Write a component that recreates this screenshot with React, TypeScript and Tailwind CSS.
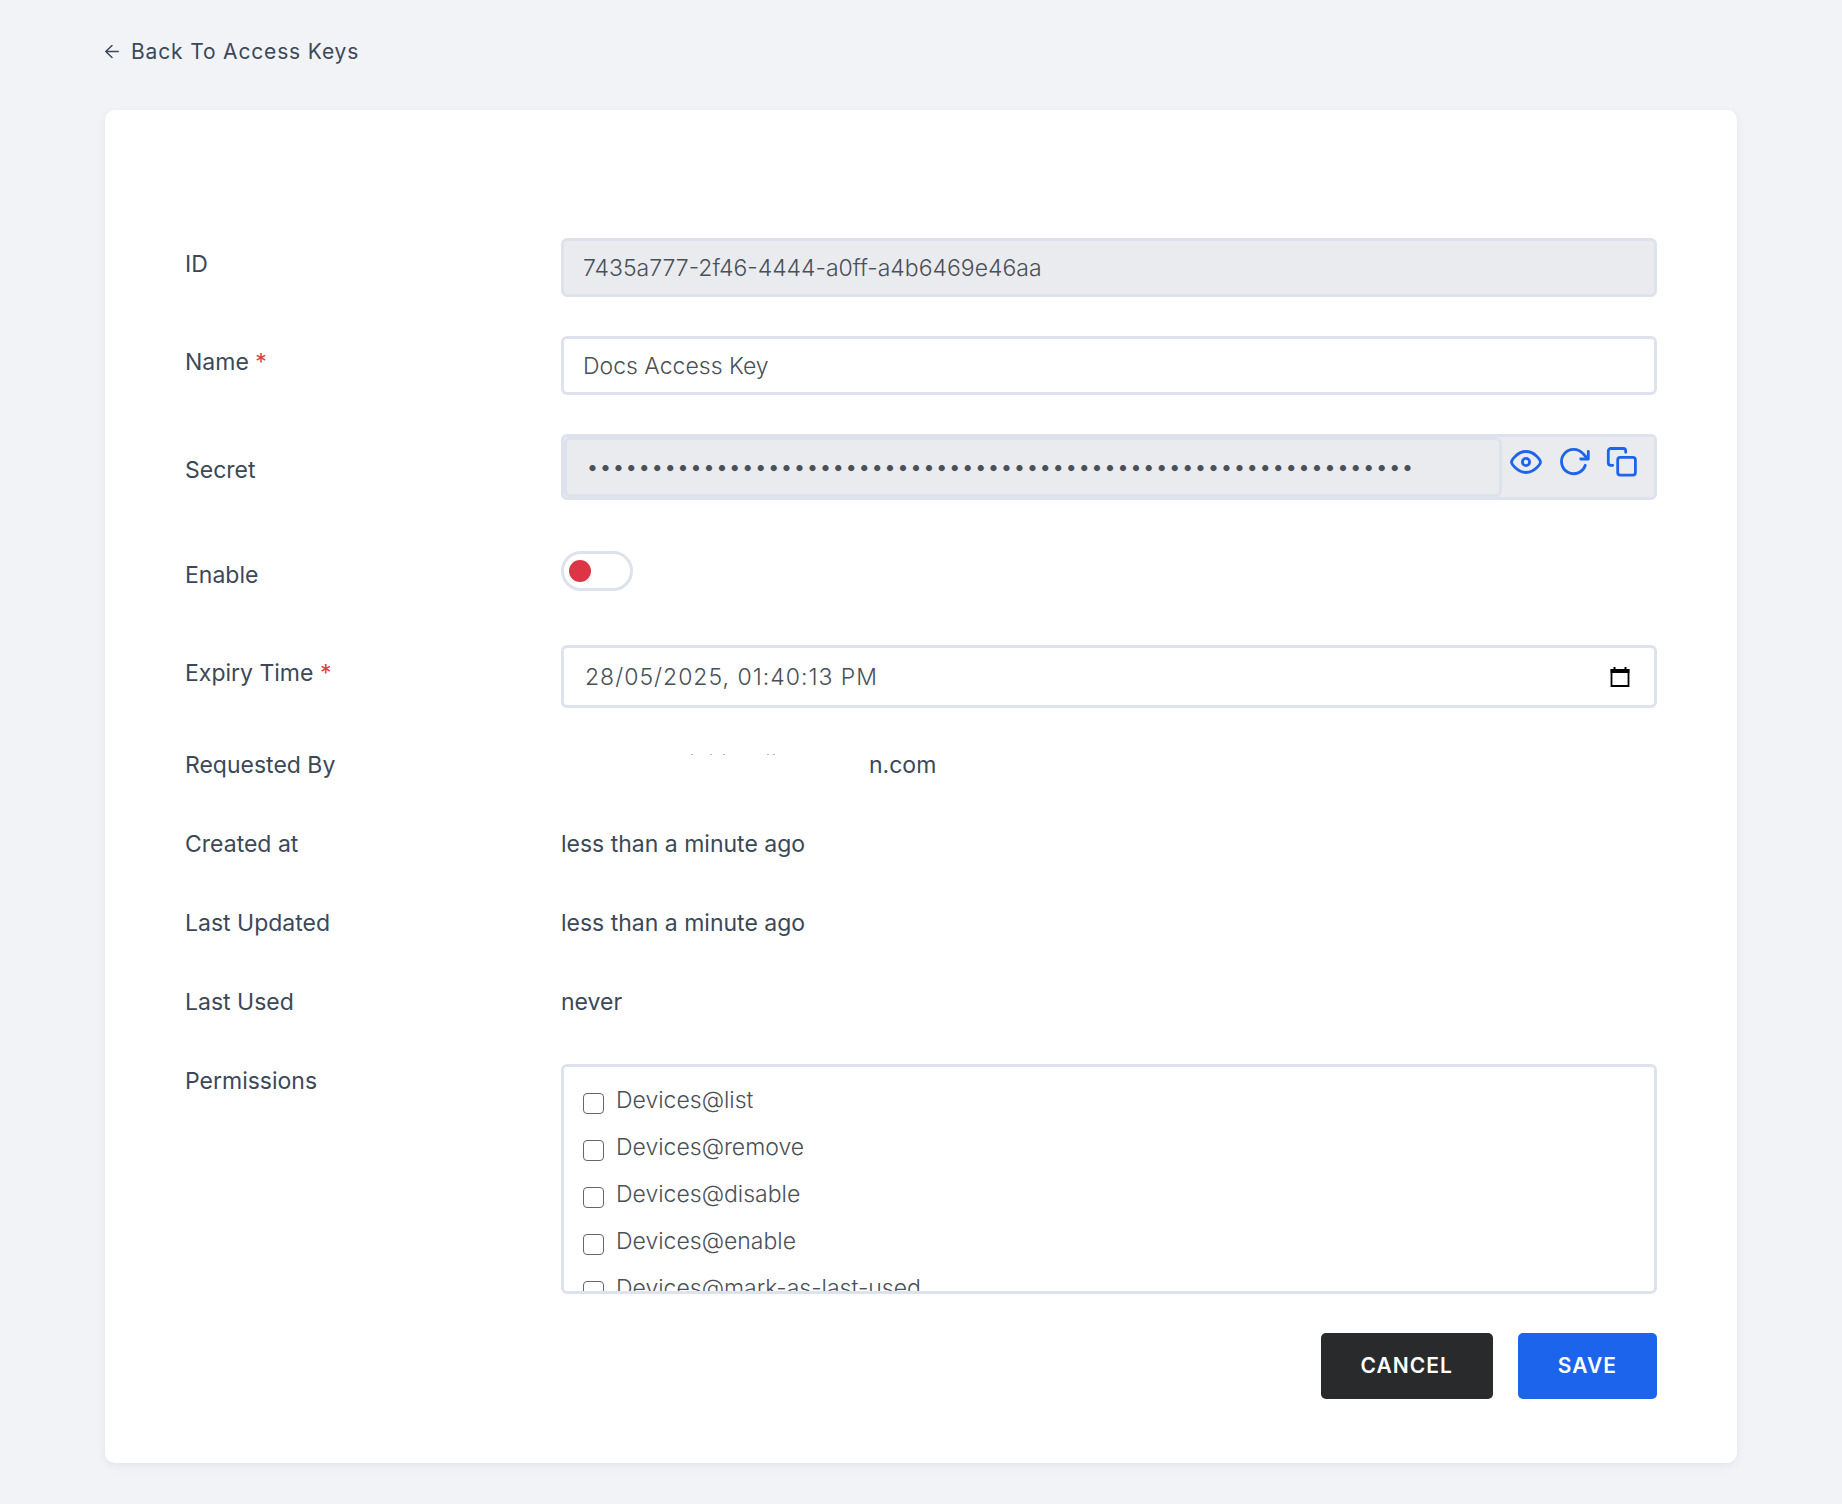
import React, { useState } from 'react';

const PERMISSIONS = [
    'Devices@list',
    'Devices@remove',
    'Devices@disable',
    'Devices@enable',
    'Devices@mark-as-last-used',
];

const inputClass = 'w-full rounded-[6px] border-[3px] border-[#dee2ec] px-[19px] text-[23px] font-[350] text-[#495057] outline-none';

const iconProps = {
    viewBox: '0 0 32 32',
    fill: 'none',
    stroke: 'currentColor',
    strokeWidth: 2.8,
    strokeLinecap: 'round' as const,
    strokeLinejoin: 'round' as const,
    className: 'w-8 h-8',
};

const EyeIcon = () => (
    <svg {...iconProps}>
        <path d="M1.5 16C1.5 14.4 7 5.5 16 5.5S30.5 14.4 30.5 16 25 26.5 16 26.5 1.5 17.6 1.5 16Z" />
        <circle cx="16" cy="16" r="3.6" />
    </svg>
);

const RefreshIcon = () => (
    <svg {...iconProps}>
        <path d="M27.3 19.3A12.2 12.2 0 1 1 25 7.6L29.6 12.8" />
        <path d="M30.3 5.3V13H22.7" />
    </svg>
);

const CopyIcon = () => (
    <svg {...iconProps}>
        <rect x="11.7" y="11.4" width="17.7" height="17.7" rx="2.5" />
        <path d="M6.7 19.3H4.8A2.5 2.5 0 0 1 2.3 16.8V5A2.5 2.5 0 0 1 4.8 2.5H17.2A2.5 2.5 0 0 1 19.7 5V6.3" />
    </svg>
);

const CalendarIcon = () => (
    <svg viewBox="0 0 20 20" className="w-5 h-5">
        <path d="M1.5 3H18.5V19H1.5Z" fill="none" stroke="currentColor" strokeWidth="1.8" />
        <path d="M0.6 2H19.4V6H0.6ZM3.5 0H5.5V3H3.5ZM14.5 0H16.5V3H14.5Z" fill="currentColor" />
    </svg>
);

interface RowProps {
    label: string;
    htmlFor?: string;
    required?: boolean;
    labelClass?: string;
    children: React.ReactNode;
}

const FormRow: React.FC<RowProps> = ({ label, htmlFor, required, labelClass = 'pt-2', children }) => (
    <div className="flex min-h-10 -mx-4">
        <div className={`w-1/4 px-4 leading-9 ${labelClass}`}>
            <label htmlFor={htmlFor}>
                {label}
                {required && <span className="text-[#d9413f]"> *</span>}
            </label>
        </div>
        <div className="w-3/4 px-4 leading-9">{children}</div>
    </div>
);

export default function App() {
    const [name, setName] = useState('Docs Access Key');
    const [expiry, setExpiry] = useState('28/05/2025, 01:40:13 PM');
    const [showSecret, setShowSecret] = useState(false);
    const [enabled, setEnabled] = useState(false);
    const [selected, setSelected] = useState<string[]>([]);

    const toggle = (p: string) =>
        setSelected(selected.includes(p) ? selected.filter(s => s !== p) : [...selected, p]);

    return (
        <div className="min-h-screen bg-[#f2f3f7] px-[105px] pt-8 pb-10 text-[23px] text-[#3c4858] font-[Inter,'Liberation_Sans',sans-serif]">
            <a href="#" className="inline-flex items-center gap-3 text-[21px] leading-10 tracking-[0.04em]">
                <svg viewBox="0 0 14 14" className="w-[14px] h-[14px]" fill="none" stroke="currentColor" strokeWidth="1.5" strokeLinecap="round" strokeLinejoin="round">
                    <path d="M13.2 6.5H0.8M7 0.5L0.8 6.5L7 12.5" />
                </svg>
                Back To Access Keys
            </a>

            <form
                onSubmit={e => e.preventDefault()}
                className="mt-[38px] flex flex-col gap-[39px] rounded-[10px] bg-white px-20 pt-32 pb-16 shadow-[0_3px_8px_rgba(60,72,120,0.08)]"
            >
                <FormRow label="ID" htmlFor="id">
                    <input id="id" readOnly value="7435a777-2f46-4444-a0ff-a4b6469e46aa" className={`${inputClass} block h-[59px] bg-[#eaebef]`} />
                </FormRow>

                <FormRow label="Name" htmlFor="name" required>
                    <input id="name" value={name} onChange={e => setName(e.target.value)} className={`${inputClass} block h-[59px] bg-white`} />
                </FormRow>

                <FormRow label="Secret" htmlFor="secret" labelClass="pt-[18px]">
                    <div className="flex h-[66px] items-stretch rounded-[6px] border-[3px] border-[#dee2ec] bg-[#eaebef] pr-4 text-[#1d64ec]">
                        <input
                            id="secret"
                            readOnly
                            type={showSecret ? 'text' : 'password'}
                            value={'x'.repeat(64)}
                            className={`${inputClass} min-w-0 flex-1 bg-[#eaebef]`}
                        />
                        <div className="flex items-start gap-4 pl-2 pt-[9px]">
                            <button type="button" aria-label="Show secret" onClick={() => setShowSecret(!showSecret)}><EyeIcon /></button>
                            <button type="button" aria-label="Regenerate secret"><RefreshIcon /></button>
                            <button type="button" aria-label="Copy secret"><CopyIcon /></button>
                        </div>
                    </div>
                </FormRow>

                <FormRow label="Enable" htmlFor="enable" labelClass="pt-[18px]">
                    <div className="flex h-[67px] items-start pt-3">
                        <input
                            id="enable"
                            type="checkbox"
                            role="switch"
                            checked={enabled}
                            onChange={() => setEnabled(!enabled)}
                            className="flex h-10 w-[72px] appearance-none items-center rounded-full border-[3px] border-[#dee2ec] bg-white px-[5px] before:h-[22px] before:w-[22px] before:rounded-full before:bg-[#dc3545] checked:justify-end checked:before:bg-[#28a745]"
                        />
                    </div>
                </FormRow>

                <FormRow label="Expiry Time" htmlFor="expiry" required labelClass="pt-[10px]">
                    <div className="flex h-[63px] items-center rounded-[6px] border-[3px] border-[#dee2ec] bg-white pl-[21px] pr-6">
                        <input
                            id="expiry"
                            value={expiry}
                            onChange={e => setExpiry(e.target.value)}
                            className="min-w-0 flex-1 text-[23px] font-[350] text-[#495057] tracking-[1px] outline-none"
                        />
                        <button type="button" aria-label="Pick a date" className="text-black"><CalendarIcon /></button>
                    </div>
                </FormRow>

                <FormRow label="Requested By" labelClass="">
                    <div className="flex">
                        {/* masked part of the address */}
                        <svg viewBox="0 0 308 36" className="h-9 w-[308px]" fill="#b4bac2" aria-hidden="true">
                            <path d="M130 7h2v1h-2zM149 7h2v1h-2zM162 7h2v1h-2zM206 7h2v1h-2zM212 7h2v1h-2z" />
                        </svg>
                        <span>n.com</span>
                    </div>
                </FormRow>

                <FormRow label="Created at" labelClass="">less than a minute ago</FormRow>
                <FormRow label="Last Updated" labelClass="">less than a minute ago</FormRow>
                <FormRow label="Last Used" labelClass="">never</FormRow>

                <FormRow label="Permissions" labelClass="">
                    <div className="mt-px flex h-[230px] flex-col gap-[11px] overflow-y-auto rounded-[6px] border-[3px] border-[#dee2ec] px-[19px] py-[15px] font-[350] text-[#495057] [scrollbar-width:none]">
                        {PERMISSIONS.map(p => (
                            <label key={p} className="flex shrink-0 items-center gap-3">
                                <input
                                    type="checkbox"
                                    checked={selected.includes(p)}
                                    onChange={() => toggle(p)}
                                    className="mt-[6px] h-[21px] w-[21px] appearance-none rounded-[4px] border border-[#666666] bg-white checked:bg-[#1d64ec]"
                                />
                                {p}
                            </label>
                        ))}
                    </div>
                </FormRow>

                <div className="flex justify-end gap-[25px] text-[21px] font-semibold tracking-[1px] text-white">
                    <button type="button" className="h-[66px] rounded-[5px] bg-[#292a2c] px-10">CANCEL</button>
                    <button type="submit" className="h-[66px] rounded-[5px] bg-[#1d64ec] px-10">SAVE</button>
                </div>
            </form>
        </div>
    );
}
